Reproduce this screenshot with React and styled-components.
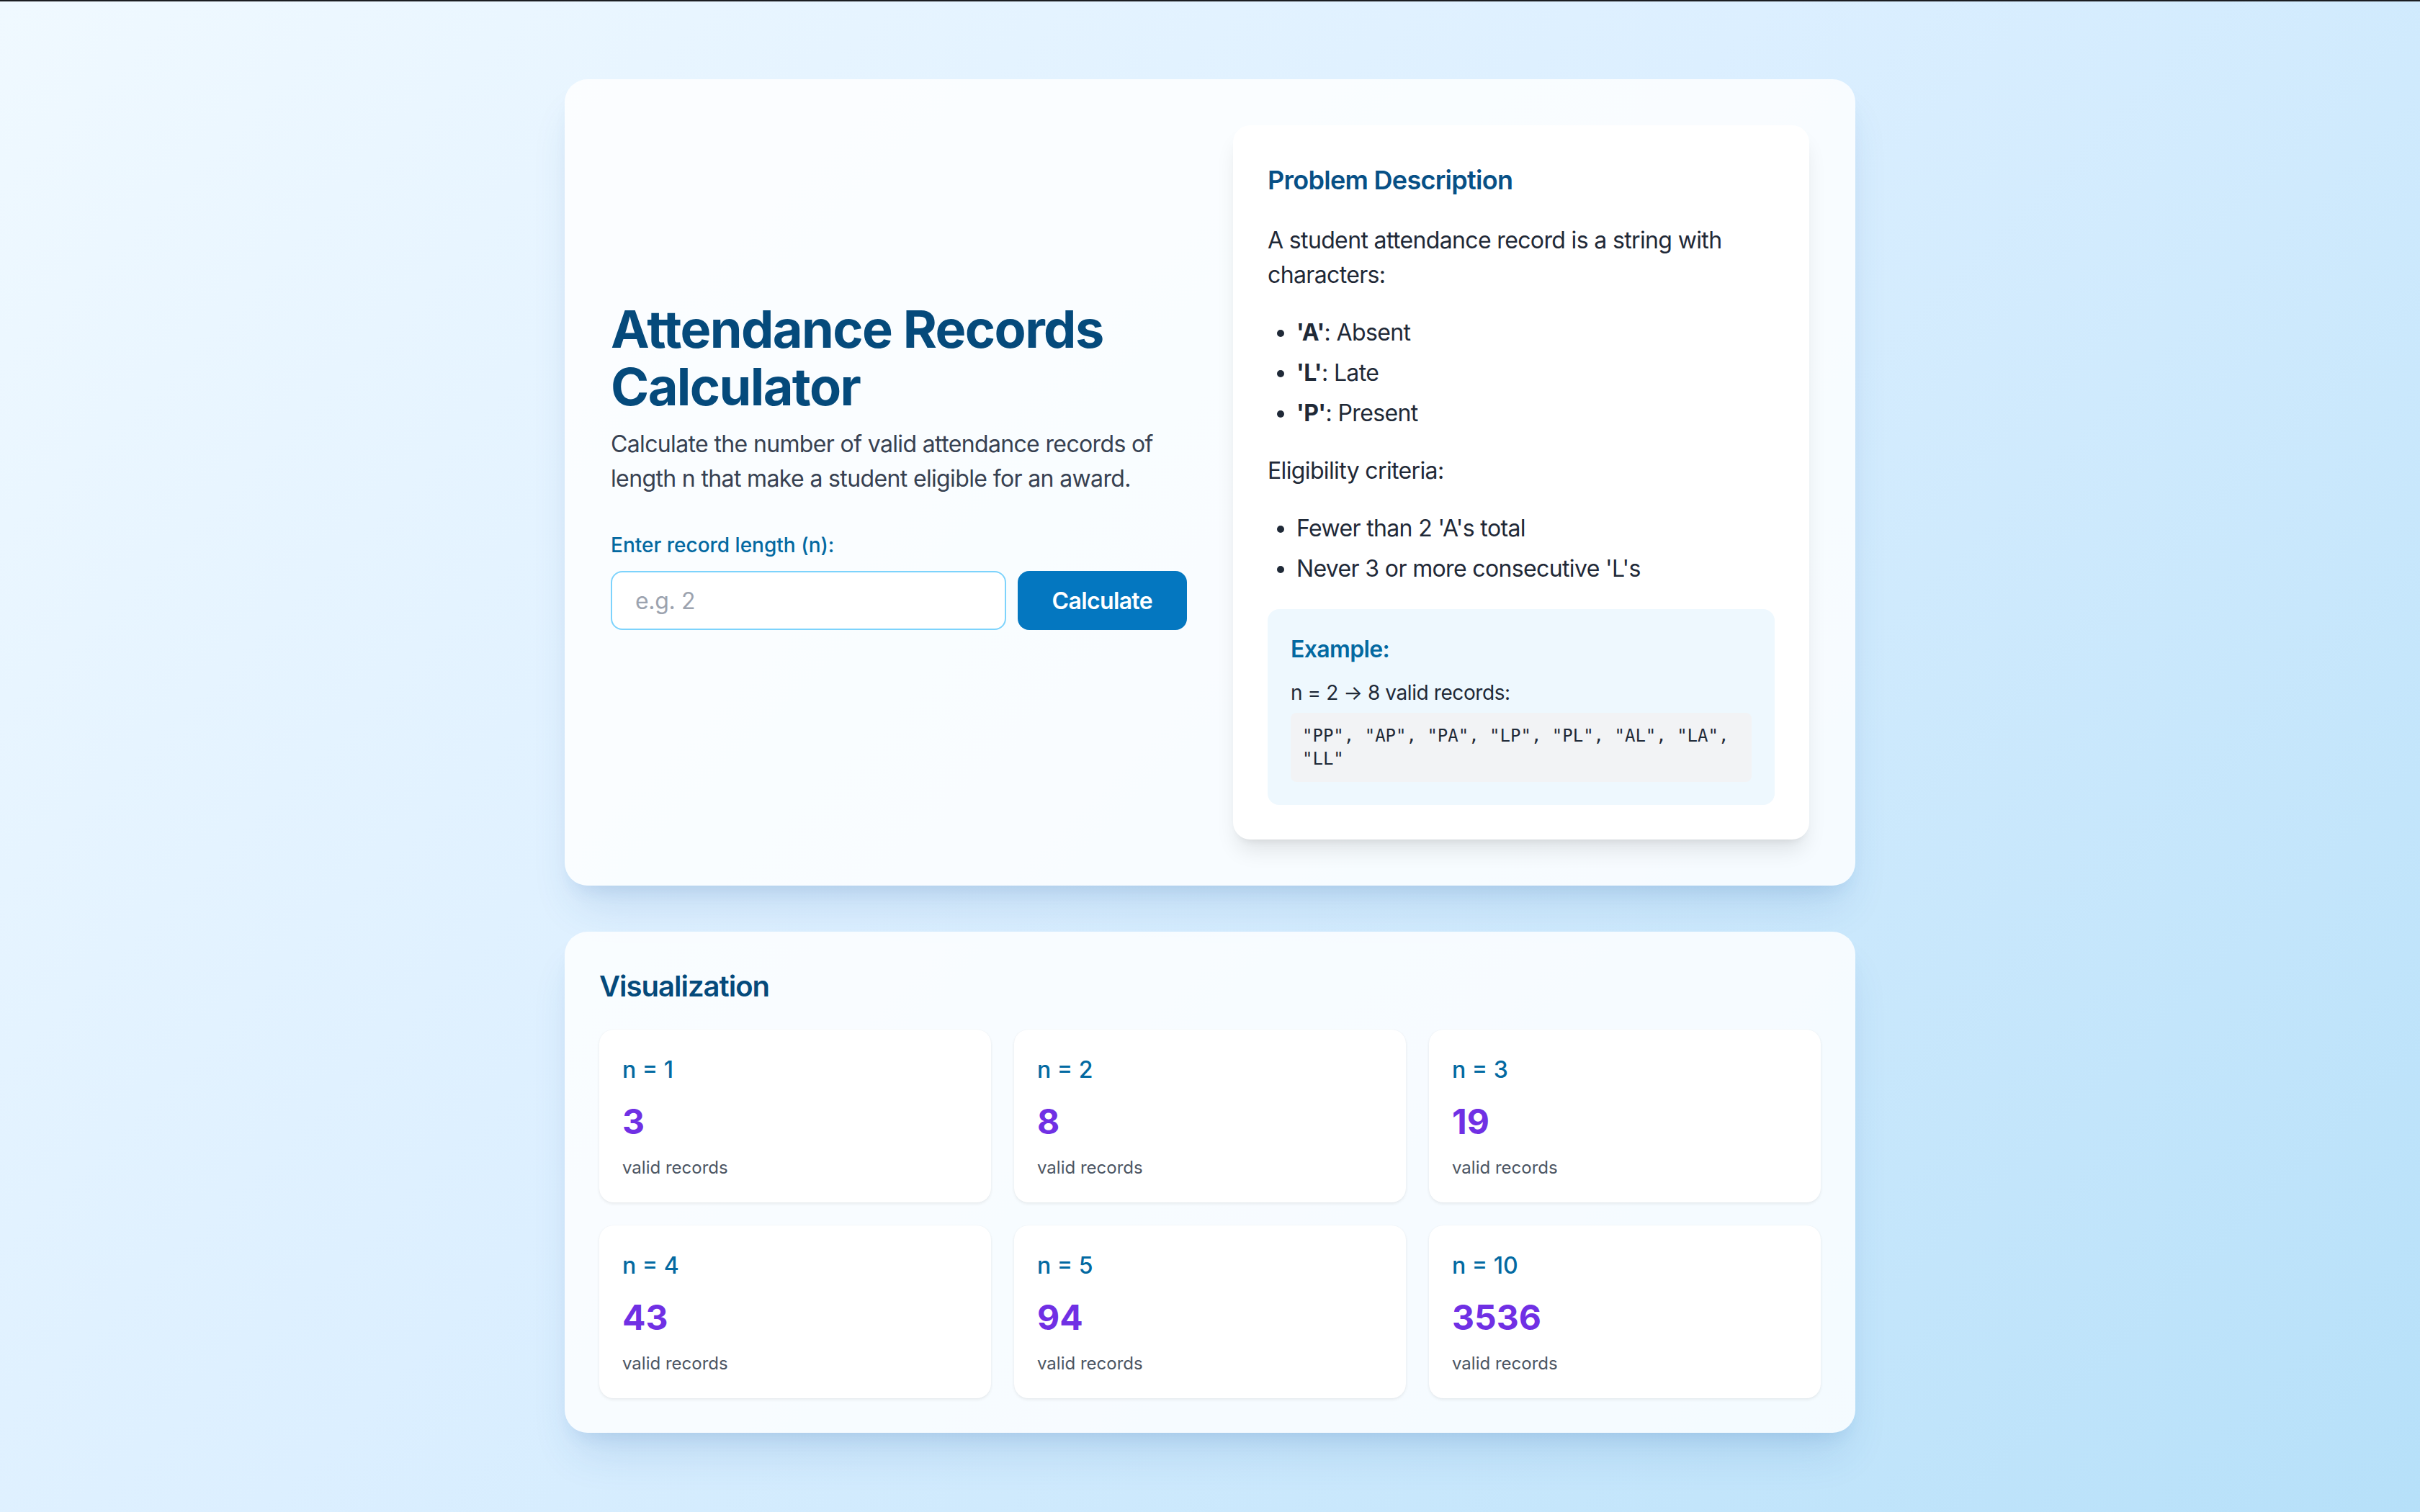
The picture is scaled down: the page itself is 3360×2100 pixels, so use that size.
import React, { useState } from 'react';
import styled, { createGlobalStyle } from 'styled-components';

// Estilos globales
const GlobalStyle = createGlobalStyle`
  html, body {
    margin: 0;
    padding: 0;
  }
  body {
    font-family: Inter, "Noto Sans", "Liberation Sans", sans-serif;
    background: linear-gradient(135deg, #f0f9ff 0%, #dcefff 45%, #b6e0f9 100%);
    min-height: 100vh;
    -webkit-font-smoothing: antialiased;
  }
  * {
    box-sizing: border-box;
  }
`;

const Page = styled.div`
  min-height: 100vh;
  border-top: 2px solid #1b1d21;
  padding: 108px 0 96px;
  display: flex;
  flex-direction: column;
  align-items: center;
  gap: 64px;
`;

const Card = styled.section`
  width: 1792px;
  padding: ${(p) => (p.$compact ? '48px' : '64px')};
  border-radius: 32px;
  background: rgba(255, 255, 255, 0.82);
  box-shadow: 0 40px 60px -16px rgba(40, 100, 170, 0.16), 0 16px 24px -12px rgba(40, 100, 170, 0.12);
`;

const TopGrid = styled.div`
  display: grid;
  grid-template-columns: minmax(0, 1fr) minmax(0, 1fr);
  gap: 64px;
`;

// Columna izquierda
const IntroColumn = styled.div`
  display: flex;
  flex-direction: column;
  justify-content: center;
  padding-bottom: 48px;
`;

const Title = styled.h1`
  margin: 0 0 16px;
  font-size: 72px;
  line-height: 80px;
  font-weight: 700;
  letter-spacing: -1.6px;
  color: #054a7b;
`;

const Lead = styled.p`
  margin: 0 0 48px;
  font-size: 32px;
  line-height: 48px;
  letter-spacing: -0.02em;
  color: #374151;
`;

const FieldLabel = styled.label`
  display: block;
  margin-bottom: 16px;
  font-size: 28px;
  line-height: 40px;
  font-weight: 500;
  color: #0369a1;
`;

const InputRow = styled.div`
  display: flex;
  gap: 16px;
`;

const NumberInput = styled.input`
  flex: 1;
  min-width: 0;
  width: 100%;
  height: 82px;
  padding: 0 32px;
  border: 2px solid #7dd3fc;
  border-radius: 16px;
  background: #fff;
  font-family: inherit;
  font-size: 32px;
  letter-spacing: -0.01em;
  color: #1f2937;
  outline: none;

  &::placeholder {
    color: #9ca3af;
  }
`;

const CalcButton = styled.button`
  flex: none;
  height: 82px;
  padding: 0 48px;
  border: none;
  border-radius: 16px;
  background: #0477c0;
  color: #fff;
  font-family: inherit;
  font-size: 32px;
  font-weight: 600;
  letter-spacing: -0.02em;
  cursor: pointer;
`;

// Panel de descripción
const InfoPanel = styled.div`
  background: #fff;
  border-radius: 24px;
  padding: 48px;
  box-shadow: 0 20px 30px -6px rgba(0, 0, 0, 0.1), 0 8px 12px -8px rgba(0, 0, 0, 0.1);
`;

const PanelTitle = styled.h2`
  margin: 0 0 32px;
  font-size: 36px;
  line-height: 56px;
  font-weight: 600;
  letter-spacing: -0.02em;
  color: #075086;
`;

const BodyText = styled.p`
  margin: 0 0 32px;
  font-size: 32px;
  line-height: 48px;
  letter-spacing: -0.02em;
  color: #1f2937;
`;

const BulletList = styled.ul`
  margin: 0 0 32px;
  padding-left: 40px;
  list-style: disc;
  color: #1f2937;

  li {
    font-size: 32px;
    line-height: 48px;
    letter-spacing: -0.02em;
  }
  li + li {
    margin-top: 8px;
  }
`;

const ExampleBox = styled.div`
  background: #eef8fe;
  border-radius: 16px;
  padding: 32px;
`;

const ExampleTitle = styled.h3`
  margin: 0 0 16px;
  font-size: 32px;
  line-height: 48px;
  font-weight: 600;
  letter-spacing: -0.02em;
  color: #0369a1;
`;

const ExampleLine = styled.p`
  margin: 0 0 8px;
  font-size: 28px;
  line-height: 40px;
  letter-spacing: -0.015em;
  color: #1f2937;
`;

const CodeBlock = styled.code`
  display: block;
  padding: 16px;
  border-radius: 8px;
  background: #f2f3f5;
  font-family: "DejaVu Sans Mono", "Liberation Mono", monospace;
  font-size: 24px;
  line-height: 32px;
  color: #1f2937;
`;

// Visualización
const VisTitle = styled.h2`
  margin: 0 0 32px;
  font-size: 40px;
  line-height: 56px;
  font-weight: 600;
  letter-spacing: -0.025em;
  color: #054a7b;
`;

const StatGrid = styled.div`
  display: grid;
  grid-template-columns: repeat(3, minmax(0, 1fr));
  gap: 32px;
`;

const StatCard = styled.div`
  background: #fff;
  border-radius: 20px;
  padding: 32px;
  box-shadow: 0 2px 4px rgba(0, 0, 0, 0.07), 0 0 2px rgba(0, 0, 0, 0.04);
`;

const StatLabel = styled.div`
  font-size: 32px;
  line-height: 48px;
  font-weight: 500;
  color: #0369a1;
`;

const StatValue = styled.div`
  margin: 16px 0;
  font-size: 48px;
  line-height: 64px;
  font-weight: 700;
  color: #7030e4;
`;

const StatNote = styled.div`
  font-size: 24px;
  line-height: 32px;
  color: #4b5563;
`;

const stats = [
  { n: 1, count: 3 },
  { n: 2, count: 8 },
  { n: 3, count: 19 },
  { n: 4, count: 43 },
  { n: 5, count: 94 },
  { n: 10, count: 3536 },
];

const App = () => {
  const [value, setValue] = useState('');

  return (
    <>
      <GlobalStyle />
      <Page>
        <Card>
          <TopGrid>
            <IntroColumn>
              <Title>Attendance Records Calculator</Title>
              <Lead>
                Calculate the number of valid attendance records of length n that make a student eligible for an award.
              </Lead>
              <FieldLabel htmlFor="record-length">Enter record length (n):</FieldLabel>
              <InputRow>
                <NumberInput
                  id="record-length"
                  type="text"
                  size={1}
                  placeholder="e.g. 2"
                  value={value}
                  onChange={(e) => setValue(e.target.value)}
                />
                <CalcButton>Calculate</CalcButton>
              </InputRow>
            </IntroColumn>

            <InfoPanel>
              <PanelTitle>Problem Description</PanelTitle>
              <BodyText>A student attendance record is a string with characters:</BodyText>
              <BulletList>
                <li><strong>'A'</strong>: Absent</li>
                <li><strong>'L'</strong>: Late</li>
                <li><strong>'P'</strong>: Present</li>
              </BulletList>
              <BodyText>Eligibility criteria:</BodyText>
              <BulletList>
                <li>Fewer than 2 'A's total</li>
                <li>Never 3 or more consecutive 'L's</li>
              </BulletList>
              <ExampleBox>
                <ExampleTitle>Example:</ExampleTitle>
                <ExampleLine>n = 2 → 8 valid records:</ExampleLine>
                <CodeBlock>"PP", "AP", "PA", "LP", "PL", "AL", "LA", "LL"</CodeBlock>
              </ExampleBox>
            </InfoPanel>
          </TopGrid>
        </Card>

        <Card $compact>
          <VisTitle>Visualization</VisTitle>
          <StatGrid>
            {stats.map((s) => (
              <StatCard key={s.n}>
                <StatLabel>n = {s.n}</StatLabel>
                <StatValue>{s.count}</StatValue>
                <StatNote>valid records</StatNote>
              </StatCard>
            ))}
          </StatGrid>
        </Card>
      </Page>
    </>
  );
};

export default App;
